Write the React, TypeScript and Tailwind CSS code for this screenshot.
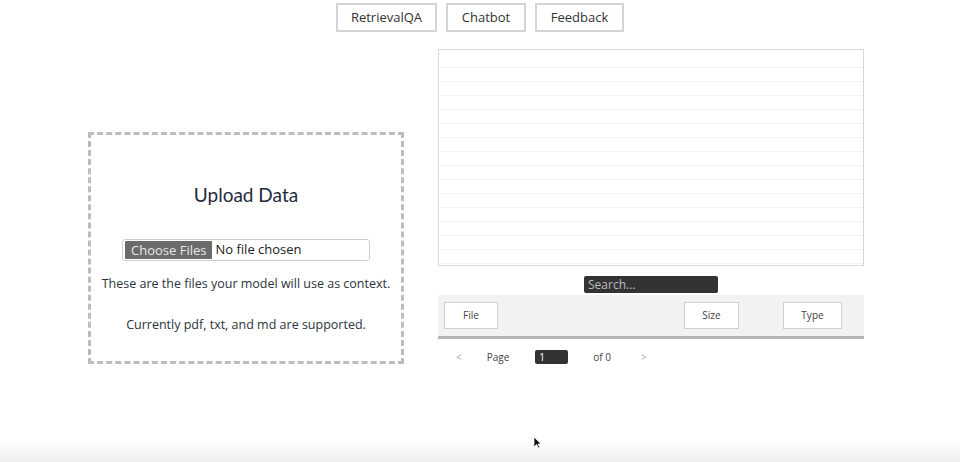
import React from 'react';

const navItems = ['RetrievalQA', 'Chatbot', 'Feedback'];

const NavButton = ({ label, width }: { label: string; width: string }) => (
  <button
    className={`h-[29px] ${width} border-2 border-[#d4d4d4] bg-white text-[13px] text-[#333] font-['Open_Sans',sans-serif]`}
  >
    {label}
  </button>
);

const UploadCard = () => (
  <div className="w-[316px] h-[232px] border-[3px] border-dashed border-[#bdbdbd] flex flex-col items-center font-['Open_Sans',sans-serif] text-[#2b3440]">
    <h2 className="mt-[46px] text-[19px] font-['Lato',sans-serif] text-[#1f2a3c]">Upload Data</h2>
    <div className="mt-[29px] w-[248px] h-[22px] border border-[#cfcfcf] rounded-[3px] flex items-center px-[2px] text-[13px]">
      <span className="bg-[#6b6b6b] text-[#e8e8e8] px-[6px] h-[18px] leading-[18px] rounded-[1px]">Choose Files</span>
      <span className="ml-[3px] text-[#222]">No file chosen</span>
    </div>
    <p className="mt-[14px] text-[12.5px]">These are the files your model will use as context.</p>
    <p className="mt-[23px] text-[12.5px]">Currently pdf, txt, and md are supported.</p>
  </div>
);

const GridPanel = () => (
  <div className="w-[426px] h-[217px] border border-[#d9d9d9] bg-white flex flex-col pt-[4px] overflow-hidden">
    {Array.from({ length: 15 }).map((_, i) => (
      <div key={i} className="h-[14px] border-b border-[#f3f3f3] shrink-0" />
    ))}
  </div>
);

const HeaderButton = ({ label, width }: { label: string; width: string }) => (
  <button className={`h-[27px] ${width} bg-white border border-[#cfcfcf] text-[10px] text-[#444] font-['Open_Sans',sans-serif]`}>
    {label}
  </button>
);

const FileTable = () => (
  <div className="w-[426px] flex flex-col items-center font-['Open_Sans',sans-serif]">
    <div className="mt-[10px] w-[134px] h-[17px] bg-[#333] rounded-[2px] text-[12px] text-[#bdbdbd] px-[4px] leading-[17px]">
      Search...
    </div>
    <div className="mt-[2px] w-full h-[44px] bg-[#f2f2f3] border-b-[3px] border-[#b5b5b5] flex items-center px-[6px]">
      <HeaderButton label="File" width="w-[54px]" />
      <div className="w-[186px]" />
      <HeaderButton label="Size" width="w-[55px]" />
      <div className="w-[44px]" />
      <HeaderButton label="Type" width="w-[59px]" />
    </div>
    <div className="self-start mt-[11px] flex items-center h-[14px] text-[10px] text-[#444]">
      <span className="ml-[18px] text-[#aaa]">&lt;</span>
      <span className="ml-[25px]">Page</span>
      <span className="ml-[26px] w-[33px] h-[14px] bg-[#333] rounded-[2px] text-white leading-[14px] pl-[4px]">1</span>
      <span className="ml-[25px]">of 0</span>
      <span className="ml-[30px] text-[#aaa]">&gt;</span>
    </div>
  </div>
);

export default function App() {
  return (
    <div className="w-[960px] h-[462px] bg-white relative overflow-hidden">
      <div className="flex justify-center gap-[9px] pt-[3px] pl-[0px]">
        <NavButton label={navItems[0]} width="w-[101px]" />
        <NavButton label={navItems[1]} width="w-[80px]" />
        <NavButton label={navItems[2]} width="w-[89px]" />
      </div>
      <div className="flex mt-[17px]">
        <div className="ml-[88px] mt-[83px]">
          <UploadCard />
        </div>
        <div className="ml-[34px] flex flex-col">
          <GridPanel />
          <FileTable />
        </div>
      </div>
      <div className="absolute left-0 right-0 bottom-0 h-[22px] bg-gradient-to-b from-white to-[#efefef]" />
      <svg className="absolute left-[533px] top-[436px]" width="9" height="13" viewBox="0 0 9 13">
        <path d="M1 1 L1 11 L3.5 8.5 L5.5 12 L6.8 11.3 L4.9 8 L8 8 Z" fill="#111" stroke="#fff" strokeWidth="0.7" />
      </svg>
    </div>
  );
}
